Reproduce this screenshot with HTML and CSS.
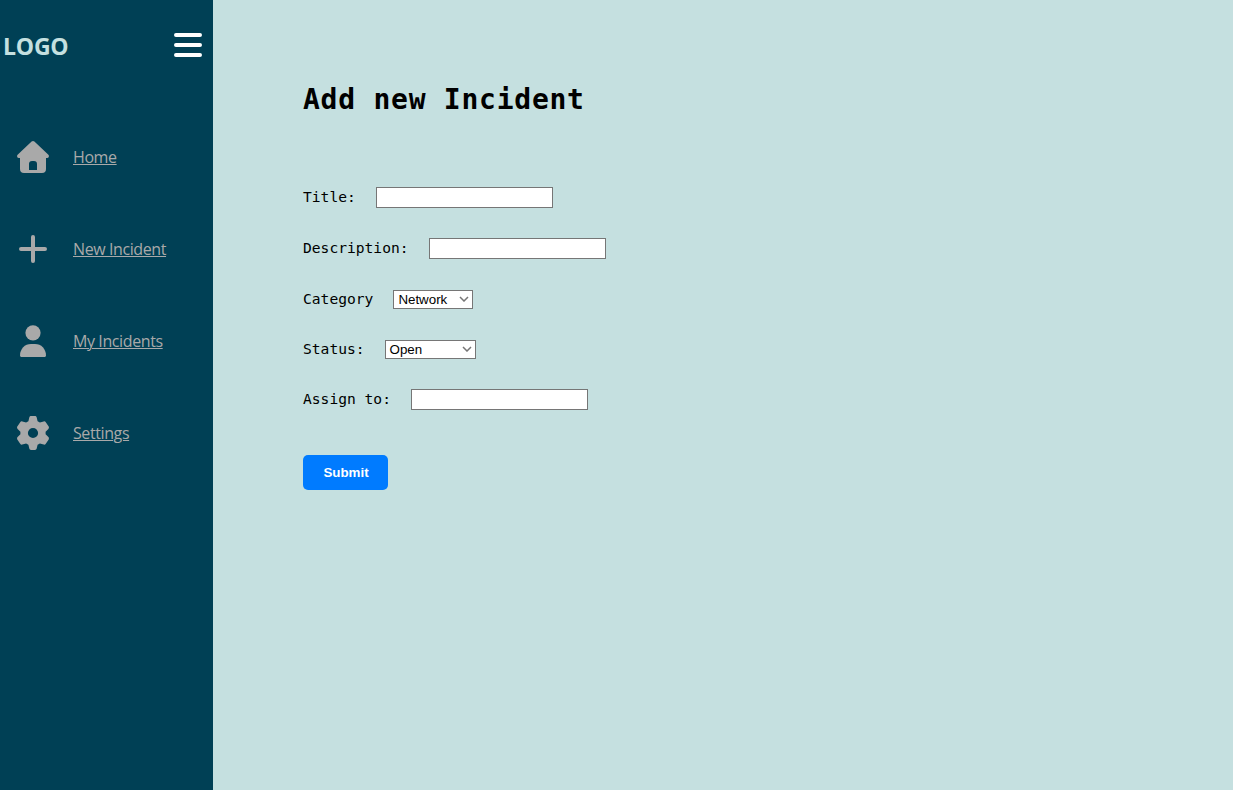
FILE: index.html
```html
<!DOCTYPE html>
<html lang="en">
<head>
<meta charset="utf-8">
<title>Add new Incident</title>
<link rel="stylesheet" href="styles.css">
</head>
<body>
<aside class="sidebar">
  <header class="brand">
    <span class="logo">LOGO</span>
    <svg class="bars" width="28" height="24" viewBox="0 0 28 24"><path d="M2 2h24M2 12h24M2 22h24" stroke="#fff" stroke-width="4" stroke-linecap="round"/></svg>
  </header>
  <nav class="nav">
    <a class="item" href="#"><svg class="icon" viewBox="0 0 36 36"><path fill-rule="evenodd" d="M16.600 2.600a2.100 2.100 0 0 1 2.800 0l14 13.100c1.200 1.200.4 3.300-1.300 3.300H31v11a4 4 0 0 1-4 4H9a4 4 0 0 1-4-4V19H3.900c-1.700 0-2.500-2.100-1.300-3.300zM17 22a3 3 0 0 0-3 3v6h8v-6a3 3 0 0 0-3-3z"/></svg><span class="label">Home</span></a>
    <a class="item" href="#"><svg class="icon" viewBox="0 0 36 36"><path d="M18 6v24M6 18h24" stroke="#a9a9a9" stroke-width="4" stroke-linecap="round"/></svg><span class="label">New Incident</span></a>
    <a class="item" href="#"><svg class="icon" viewBox="0 0 36 36"><circle cx="18" cy="9.800" r="7.600"/><path d="M5 32.500C5 25.800 9.800 21 16 21h4c6.200 0 11 4.800 11 11.500 0 .9-.7 1.500-1.500 1.500h-23C5.700 34 5 33.400 5 32.500z"/></svg><span class="label">My Incidents</span></a>
    <a class="item" href="#"><svg class="icon" viewBox="0 0 36 36"><path fill-rule="evenodd" d="M16 1h4c.9 0 1.500.6 1.700 1.400l.9 3.900 2.300 1.300 3.800-1.200c.8-.2 1.700.1 2.100.8l2.900 4.400c.4.8.3 1.700-.3 2.300l-2.800 2.800v2.600l2.800 2.800c.6.600.7 1.500.3 2.300l-2.900 4.400c-.4.700-1.300 1-2.100.8l-3.800-1.200-2.300 1.300-.9 3.900c-.2.800-.8 1.400-1.700 1.400h-4c-.9 0-1.500-.6-1.700-1.400l-.9-3.900-2.300-1.300-3.800 1.200c-.8.2-1.700-.1-2.100-.8l-2.900-4.400c-.4-.8-.3-1.700.3-2.300l2.800-2.800v-2.600l-2.800-2.800c-.6-.6-.7-1.500-.3-2.300l2.900-4.400c.4-.7 1.300-1 2.100-.8l3.800 1.200 2.300-1.300.9-3.900C14.500 1.600 15.100 1 16 1zM18 12.900a5.100 5.100 0 1 0 0 10.200 5.100 5.100 0 0 0 0-10.200z"/></svg><span class="label">Settings</span></a>
  </nav>
</aside>
<main class="content">
  <h1 class="title">Add new Incident</h1>
  <form class="form">
    <div class="row"><label for="title">Title:</label><input class="field" id="title" type="text"></div>
    <div class="row"><label for="description">Description:</label><input class="field" id="description" type="text"></div>
    <div class="row short"><label for="category">Category</label><div class="select category" id="category"><span>Network</span><svg class="chevron" width="10" height="6" viewBox="0 0 10 6"><path d="M1 1l4 4 4-4"/></svg></div></div>
    <div class="row short"><label for="status">Status:</label><div class="select status" id="status"><span>Open</span><svg class="chevron" width="10" height="6" viewBox="0 0 10 6"><path d="M1 1l4 4 4-4"/></svg></div></div>
    <div class="row short"><label for="assign">Assign to:</label><input class="field" id="assign" type="text"></div>
    <button class="submit" type="button">Submit</button>
  </form>
</main>
</body>
</html>
```
FILE: styles.css
```css
* { box-sizing: border-box; }
body {
  margin: 0;
  height: 790px;
  display: flex;
  background: #c5e0e0;
  color: #000;
  overflow: hidden;
}
.sidebar {
  width: 213px;
  flex: none;
  background: #004055;
  font-family: "Open Sans", "Noto Sans", sans-serif;
}
.brand {
  height: 111px;
  padding: 30px 11px 0 3px;
  display: flex;
  justify-content: space-between;
  align-items: flex-start;
}
.logo {
  font-size: 23px;
  line-height: 32px;
  font-weight: 700;
  letter-spacing: -0.2px;
  color: #c5e0e0;
}
.bars { margin-top: 3px; fill: none; }
.item {
  height: 92px;
  padding-left: 15px;
  display: flex;
  align-items: center;
  gap: 22px;
  color: #a9a9a9;
  font-size: 16px;
  letter-spacing: -0.4px;
  text-decoration: none;
}
.icon { width: 36px; height: 36px; flex: none; fill: #a9a9a9; }
.label {
  line-height: 22px;
  text-decoration: underline;
  text-decoration-thickness: 1px;
  text-underline-offset: 1px;
}
.content {
  flex: 1;
  padding: 80px 0 0 90px;
  font-family: "DejaVu Sans Mono", monospace;
  font-size: 14.62px;
}
.title {
  margin: 0;
  font-size: 28px;
  line-height: 40px;
  font-weight: 700;
  letter-spacing: 0.75px;
}
.form { padding-top: 52px; }
.row {
  height: 51px;
  display: flex;
  align-items: center;
  gap: 20px;
}
.row.short { height: 50px; }
.row label { padding-bottom: 2px; }
.field {
  width: 177px;
  height: 21px;
  border: 1px solid #767676;
  background: #fff;
  padding: 1px 2px;
}
.select {
  height: 19px;
  border: 1px solid #767676;
  background: #fff;
  padding: 0 3px 0 4px;
  display: flex;
  align-items: center;
  justify-content: space-between;
  font: 13.33px "Liberation Sans", Arial, sans-serif;
}
.category { width: 80px; }
.status { width: 91px; }
.chevron { fill: none; stroke: #767676; stroke-width: 1.5; }
.submit {
  display: block;
  width: 85px;
  height: 35px;
  margin-top: 31px;
  padding: 0 0 1px 1px;
  border: 0;
  border-radius: 5px;
  background: #007bff;
  color: #fff;
  font: 700 13.33px "Liberation Sans", Arial, sans-serif;
}
```
